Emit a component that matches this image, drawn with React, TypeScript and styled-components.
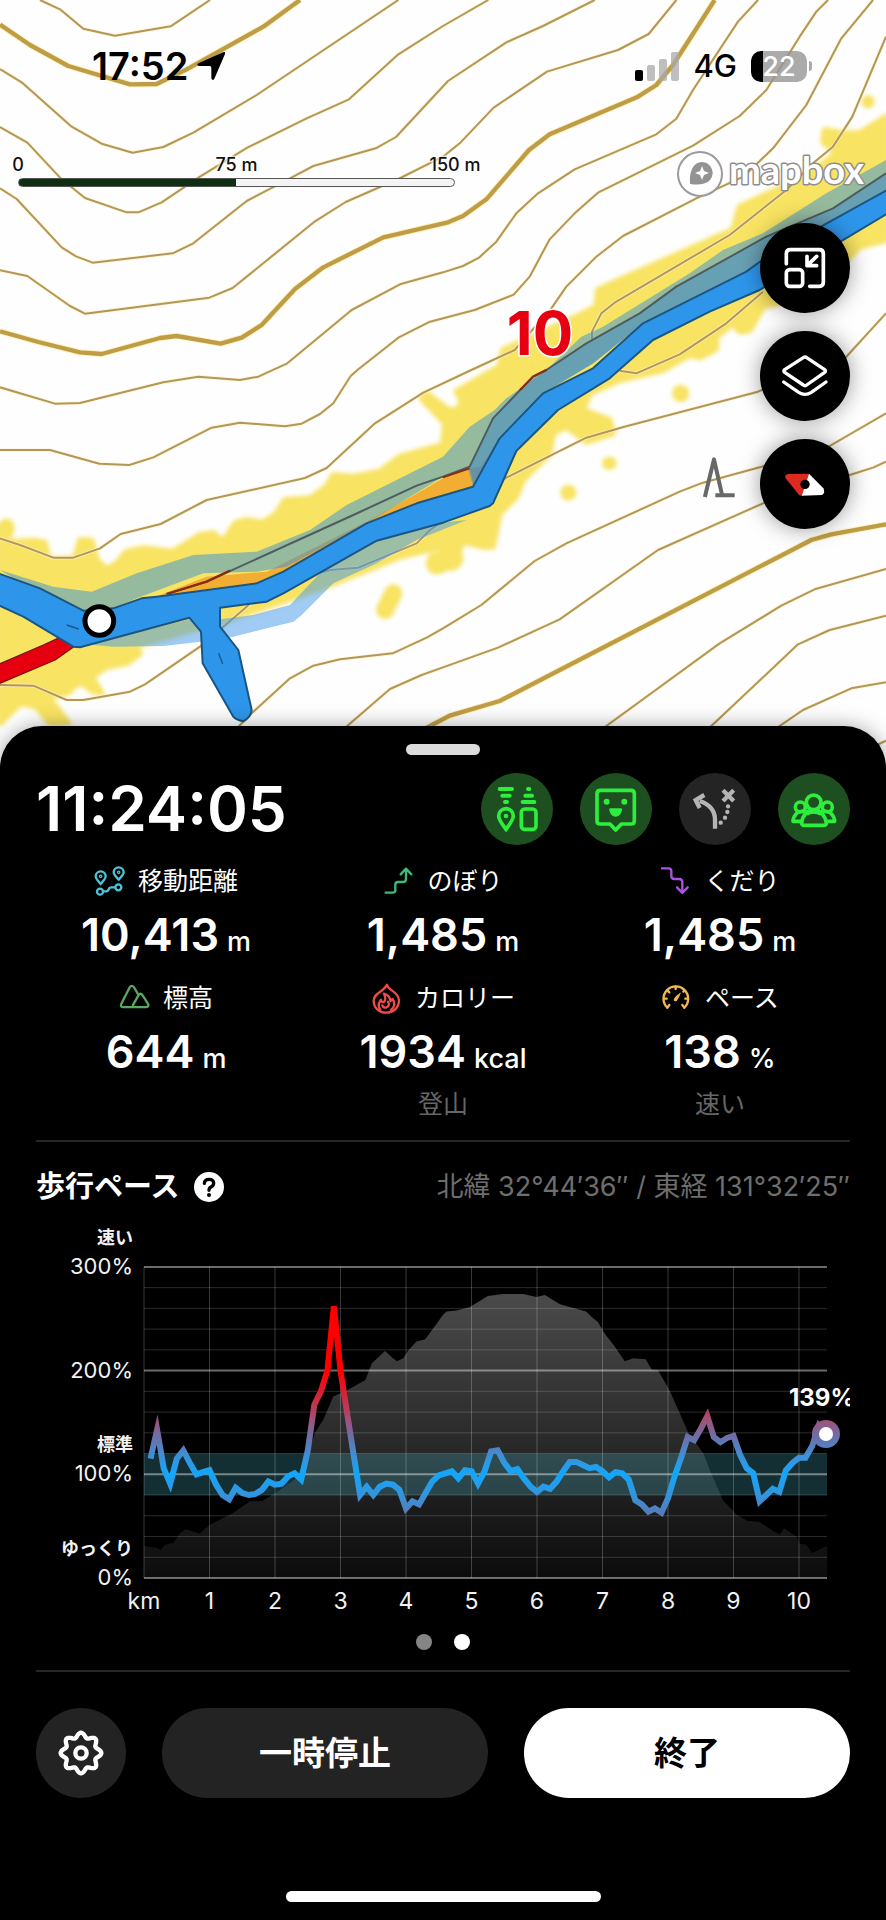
import React from "react";
import styled, { createGlobalStyle } from "styled-components";

const GlobalStyle = createGlobalStyle`
  *, *::before, *::after { box-sizing: border-box; }
  body {
    margin: 0;
    background: #000;
    font-family: Inter, "Noto Sans CJK JP", sans-serif;
    -webkit-font-smoothing: antialiased;
  }
  button { font: inherit; border: 0; padding: 0; cursor: pointer; }
`;

/* ---------- layout ---------- */

const Page = styled.main`
  min-height: 100vh;
  display: flex;
  flex-direction: column;
  background: #fff;
`;

const MapArea = styled.section`
  position: relative;
  height: 790px;
  overflow: hidden;
  background: #fefefe;
`;

const MapCanvas = styled.svg`
  position: absolute;
  inset: 0;
  width: 100%;
  height: 100%;
`;

const MapOverlay = styled.div`
  position: relative;
  display: flex;
  flex-direction: column;
`;

const StatusBar = styled.header`
  display: flex;
  align-items: center;
  justify-content: space-between;
  padding: 44px 74px 0 92px;
  height: 88px;
`;

const StatusGroup = styled.div<{ $gap: number }>`
  display: flex;
  align-items: center;
  gap: ${(p) => p.$gap}px;
`;

const Clock = styled.time`
  font-size: 38px;
  line-height: 44px;
  font-weight: 600;
  color: #000;
`;

const Network = styled.span`
  font-size: 31px;
  line-height: 44px;
  font-weight: 500;
  color: #000;
`;

const Battery = styled.div`
  display: flex;
  align-items: center;
  gap: 2px;
`;

const BatteryBody = styled.div`
  width: 56px;
  height: 31px;
  border-radius: 10px;
  background: linear-gradient(to right, #000 22%, rgba(150, 150, 150, 0.8) 22%);
  color: #fff;
  font-size: 27px;
  line-height: 31px;
  font-weight: 500;
  text-align: center;
`;

const BatteryNub = styled.div`
  width: 3px;
  height: 10px;
  border-radius: 0 3px 3px 0;
  background: #aaa;
`;

const MapInfo = styled.div`
  display: flex;
  justify-content: space-between;
  padding: 60px 18px 0;
`;

const Scale = styled.div`
  display: flex;
  flex-direction: column;
  gap: 4px;
  width: 437px;
`;

const ScaleLabels = styled.div`
  position: relative;
  height: 22px;
  font-size: 18px;
  line-height: 22px;
  font-weight: 500;
  color: #111;
`;

const ScaleLabel = styled.span<{ $at: number }>`
  position: absolute;
  left: ${(p) => p.$at}%;
  top: 6px;
  white-space: nowrap;
  transform: translateX(-50%);
  text-shadow: 0 0 3px #fff, 0 0 3px #fff, 0 0 3px #fff;
`;

const ScaleBar = styled.div`
  height: 9px;
  margin-top: 4px;
  border: 1px solid #555;
  border-radius: 5px;
  background: linear-gradient(to right, #0f2f12 50%, #f4f4f4 50%);
`;

const MapboxMark = styled.svg`
  width: 192px;
  height: 50px;
  overflow: visible;
`;

const MapButtons = styled.div`
  display: flex;
  flex-direction: column;
  align-items: flex-end;
  gap: 18px;
  padding: 25px 36px 0;
`;

const RoundButton = styled.button<{ $bg: string; $size: number; $shadow?: boolean }>`
  display: flex;
  align-items: center;
  justify-content: center;
  flex: none;
  width: ${(p) => p.$size}px;
  height: ${(p) => p.$size}px;
  border-radius: 50%;
  background: ${(p) => p.$bg};
  box-shadow: ${(p) => (p.$shadow ? "0 0 22px rgba(0, 0, 0, 0.4)" : "none")};

  svg { width: 100%; height: 100%; }
`;

const Sheet = styled.section`
  position: relative;
  flex: 1;
  display: flex;
  flex-direction: column;
  margin-top: -64px;
  padding: 18px 36px 18px;
  border-radius: 42px 42px 0 0;
  background: #000;
  color: #fff;
  box-shadow: 0 0 20px rgba(0, 0, 0, 0.35);
`;

const Grabber = styled.div`
  align-self: center;
  width: 74px;
  height: 11px;
  border-radius: 6px;
  background: #dcdcdc;
`;

const SummaryRow = styled.div`
  display: flex;
  align-items: center;
  justify-content: space-between;
  margin-top: 18px;
  height: 72px;
`;

const Elapsed = styled.h1`
  margin: 0;
  font-size: 62px;
  line-height: 72px;
  font-weight: 600;
`;

const StatusButtons = styled.div`
  display: flex;
  gap: 27px;
`;

const Metrics = styled.dl`
  display: grid;
  grid-template-columns: repeat(3, 1fr);
  column-gap: 17px;
  row-gap: 15px;
  margin: 18px 0;
`;

const Metric = styled.div`
  display: flex;
  flex-direction: column;
  align-items: center;
`;

const MetricLabel = styled.dt`
  display: flex;
  align-items: center;
  gap: 14px;
  height: 36px;
  font-size: 25px;
  line-height: 36px;
`;

const MetricIcon = styled.svg`
  width: 30px;
  height: 30px;
  overflow: visible;
`;

const MetricValue = styled.dd`
  display: flex;
  align-items: baseline;
  gap: 8px;
  height: 60px;
  margin: 6px 0 0;
  font-size: 45px;
  line-height: 60px;
  font-weight: 600;
`;

const Unit = styled.span`
  font-size: 27px;
  line-height: 36px;
  font-weight: 500;
`;

const MetricNote = styled.dd`
  margin: 4px 0 0;
  font-size: 25px;
  line-height: 36px;
  color: #666;
`;

const Divider = styled.hr`
  width: 100%;
  height: 2px;
  margin: 0;
  border: 0;
  background: #262626;
`;

const ChartHeader = styled.div`
  display: flex;
  align-items: center;
  justify-content: space-between;
  height: 44px;
  margin-top: 23px;
`;

const ChartTitle = styled.h2`
  display: flex;
  align-items: center;
  gap: 14px;
  margin: 0;
  font-size: 29px;
  line-height: 44px;
  font-weight: 700;
`;

const Coordinates = styled.p`
  margin: 0;
  font-size: 27px;
  line-height: 44px;
  color: #6e6e6e;
`;

const Chart = styled.svg`
  display: block;
  width: 100%;
  margin-top: 16px;
`;

const Pager = styled.div`
  display: flex;
  justify-content: center;
  gap: 22px;
  margin: 17px 0 20px;
`;

const Dot = styled.button<{ $active?: boolean }>`
  width: 16px;
  height: 16px;
  border-radius: 50%;
  background: ${(p) => (p.$active ? "#fff" : "#858585")};
`;

const Actions = styled.div`
  display: flex;
  gap: 36px;
  margin-top: 36px;
`;

const ActionButton = styled.button<{ $primary?: boolean }>`
  flex: 1;
  height: 90px;
  border-radius: 45px;
  background: ${(p) => (p.$primary ? "#fff" : "#232323")};
  color: ${(p) => (p.$primary ? "#000" : "#fff")};
  font-size: 33px;
  line-height: 44px;
  font-weight: 700;
`;

const HomeIndicator = styled.div`
  align-self: center;
  width: 315px;
  height: 11px;
  margin-top: auto;
  border-radius: 6px;
  background: #fff;
`;

const thinContours = [
  "120,0 180,28 250,86 345,107 512,79 630,0",
  "0,207 65,247 215,380 305,431 398,458 490,441 580,398 770,285 1195,0",
  "0,381 82,428 185,538 255,594 380,637 415,637 485,607 600,530 742,443 920,355 1047,298 1195,163 1329,78 1465,0",
  "0,565 50,597 185,742 228,769 278,788 518,760 580,730 740,603 870,535 940,498 1127,445 1188,411 1344,243 1519,127 1629,78 1784,0",
  "0,811 82,828 210,918 255,941 628,893 698,864 945,664 1037,606 1195,537 1329,470 1379,430 1481,323 1641,215 1854,150 1946,102 2029,0",
  "0,1162 165,1211 240,1209 490,1147 595,1130 720,1140 775,1130 862,1090 1055,930 1200,853 1329,817 1389,798 1437,773 1489,725 1549,640 1614,580 1724,508 1969,403 2029,356 2079,270 2214,65 2274,0",
  "0,1350 150,1350 298,1391 388,1395 460,1372 635,1283 720,1268 855,1279 905,1271 960,1242 1000,1210 1052,1128 1075,1108 1195,1013 1290,965 1424,930 1541,884 1589,830 1649,718 1724,640 1794,578 2079,437 2219,348 2299,270 2399,110 2449,35 2484,0",
  "0,1615 60,1635 160,1673 220,1673 300,1645 362,1602 482,1572 620,1500 915,1434 980,1404 1125,1270 1270,1178 1414,1110 1544,1050 1654,925 1699,860 1789,770 1869,708 2089,595 2230,530 2319,445 2419,315 2524,115 2619,0",
  "1776,1020 1776,995 1804,940 1844,908 2189,705 2359,570 2439,490 2499,440 2557,350 2658,110",
  "1859,1112 1909,1120 2039,1063 2179,970 2289,875",
  "2658,940 2530,1080 2400,1120 2274,1175 1873,1280 1759,1313 1519,1433 1290,1590 1250,1630 1075,1703 990,1710 800,1760 740,1820 670,1880 600,1940 435,2053 390,2075 250,2100 200,2100 100,2057 0,2055",
  "2658,1240 2489,1338 2279,1402 2109,1448 2039,1475 1699,1630 1604,1683 1444,1815 1329,1885 1280,1913 1178,1960 1020,1978 940,1997 870,2035 755,2140 705,2190",
  "2658,1385 2619,1403 2549,1425 2289,1510 1974,1650 1679,1858 1494,1943 1329,2002 1265,2025 1170,2067 1045,2175 1000,2215",
  "2658,1707 2444,1768 2344,1817 2159,1930 1819,2178 1770,2215",
  "2658,1847 2489,1890 2394,1933 2134,2178 2090,2220",
  "2658,2047 2554,2065 2409,2130 2339,2178 2280,2220",
  "2600,2250 2658,2222",
];

const thickContours = [
  "0,74 90,135 205,198 390,253 470,252 560,208 790,80 900,0",
  "0,994 115,1026 240,1057 305,1062 480,1014 530,1008 662,1031 725,1013 785,975 885,867 970,802 1150,712 1344,667 1389,648 1459,598 1587,450 1649,403 1914,290 1969,255 2019,195 2144,0",
  "2658,1573 2494,1603 2434,1620 2279,1700 1499,2103 1349,2147 1220,2215",
];

const heatArea =
  "0,1575 30,1625 100,1622 135,1628 145,1680 225,1675 240,1620 275,1622 290,1680 320,1708 350,1690 380,1655 430,1645 520,1655 600,1605 640,1600 670,1625 705,1570 740,1560 790,1568 830,1540 855,1500 930,1495 980,1460 1000,1425 1060,1430 1140,1415 1200,1370 1329,1335 1335,1270 1265,1195 1280,1180 1345,1230 1375,1230 1385,1200 1369,1175 1499,1100 1509,1050 1599,1010 1719,955 1789,920 1794,870 1859,840 2199,690 2219,620 2349,560 2429,520 2509,460 2469,425 2475,390 2519,398 2579,400 2658,350 2658,720 2579,740 2520,800 2370,900 2289,920 2250,990 2220,995 2199,970 2149,1010 2149,1045 2100,1072 2069,1065 1989,1110 1859,1140 1769,1180 1749,1230 1829,1260 1839,1300 1759,1325 1699,1280 1659,1300 1649,1360 1569,1440 1549,1490 1499,1540 1479,1640 1449,1640 1389,1625 1369,1670 1329,1710 1329,1640 1200,1670 1000,1750 860,1800 680,1860 400,1940 420,1960 380,1990 320,2000 275,2030 305,2080 280,2075 240,2045 200,2080 145,2090 205,2170 150,2170 110,2120 60,2110 0,2170";

const upperBand =
  "2658,480 2479,580 2289,700 2169,750 2069,820 1809,980 1744,1010 1639,1110 1519,1195 1484,1230 1409,1280 1329,1370 1040,1515 930,1590 770,1655 580,1665 410,1720 275,1775 160,1760 0,1710 240,1860 340,1825 410,1795 610,1720 770,1715 860,1700 1100,1570 1329,1430 1404,1407 1420,1460 1500,1315 1630,1180 1780,1090 1930,970 2240,815 2658,570";
const trackBand =
  "2658,520 2499,625 2299,710 2029,860 1919,940 1759,1030 1639,1110 1599,1130 1479,1255 1409,1400 1420,1450 1500,1315 1630,1180 1780,1090 1930,970 2240,815 2658,570";
const track =
  "2658,520 2499,625 2299,710 2029,860 1919,940 1759,1030 1639,1110 1599,1130 1479,1255 1409,1400 1329,1430 1250,1457 1060,1545 620,1745 500,1782";
const lowerBand =
  "0,1815 70,1850 220,1930 340,1940 490,1938 600,1925 700,1910 880,1865 905,1845 1000,1750 1130,1690 1250,1620 1400,1560 1329,1568 1130,1622 960,1720 870,1815 760,1845 662,1858 600,1850 240,1940 70,1850 0,1800";
const river =
  "-20,1715 120,1765 250,1832 340,1825 425,1795 470,1790 770,1750 850,1715 1100,1570 1250,1510 1419,1460 1499,1315 1629,1180 1779,1105 1929,970 2239,815 2300,770 2680,560 2680,630 2279,870 2129,935 1959,1020 1829,1135 1674,1230 1549,1353 1479,1510 1469,1518 1329,1568 1130,1622 850,1780 800,1805 660,1823 660,1880 715,1950 755,2130 Q754,2150 730,2164 Q708,2160 700,2150 L608,1990 603,1895 568,1853 240,1942 220,1940 70,1850 -20,1808";

const heatSpots: [number, number, number, number][] = [
  [2604, 305, 20, 20], [2042, 1180, 26, 26], [1828, 1390, 22, 20], [1705, 1478, 24, 24],
  [1310, 1690, 32, 34], [1350, 1675, 40, 38], [20, 1585, 24, 30], [2238, 970, 24, 30],
  [2110, 1035, 44, 36],
];

function TerrainMap() {
  return (
    <MapCanvas viewBox="0 0 886 790" preserveAspectRatio="xMidYMin slice" role="img" aria-label="地形図">
      <defs>
        <filter id="soft" x="-5%" y="-5%" width="110%" height="110%">
          <feGaussianBlur stdDeviation="7" />
        </filter>
      </defs>
      <g transform="scale(0.333333)" strokeLinejoin="round">
        <g filter="url(#soft)" fill="#f8e362">
          <polygon points={heatArea} stroke="#f8e362" strokeWidth="18" />
          {heatSpots.map(([x, y, rx, ry]) => (
            <ellipse key={x} cx={x} cy={y} rx={rx} ry={ry} />
          ))}
          <path d="M1180,1780L1155,1830" stroke="#f8e362" strokeWidth="54" strokeLinecap="round" />
        </g>
        <g fill="none" stroke="#fff3c4" strokeWidth="11" strokeOpacity="0.7">
          {thinContours.map((p) => <polyline key={p} points={p} />)}
        </g>
        <g fill="none" stroke="#b3965a" strokeWidth="6">
          {thinContours.map((p) => <polyline key={p} points={p} />)}
        </g>
        <g fill="none" stroke="#fff3c4" strokeWidth="19">
          {thickContours.map((p) => <polyline key={p} points={p} />)}
        </g>
        <g fill="none" stroke="#bf9d47" strokeWidth="13">
          {thickContours.map((p) => <polyline key={p} points={p} />)}
        </g>
        <polygon
          points="480,1785 620,1730 800,1715 900,1665 1110,1560 1260,1475 1329,1435 1404,1407 1440,1400 1500,1320 1470,1360 1420,1460 1329,1490 1100,1575 800,1760"
          fill="#f2ae33"
        />
        <polygon points={upperBand} fill="#2c8fe0" fillOpacity="0.48" />
        <polygon points={trackBand} fill="#3a86c8" fillOpacity="0.5" />
        <polygon points={lowerBand} fill="#3f97ea" fillOpacity="0.5" />
        <polyline points={track} fill="none" stroke="#4d5c60" strokeWidth="6" />
        <polyline points="1639,1110 1599,1130 1560,1170" fill="none" stroke="#8a2b12" strokeWidth="6" />
        <polyline points="1409,1405 1329,1432" fill="none" stroke="#8a2b12" strokeWidth="6" />
        <polyline points="690,1712 620,1745 500,1782" fill="none" stroke="#8a2b12" strokeWidth="7" />
        <polygon points="-20,2000 130,1935 180,1912 225,1938 165,1980 -20,2058" fill="#e6000f" stroke="#7a1313" strokeWidth="4" />
        <path d={`M${river}Z`} fill="#2e96ea" stroke="#1a5683" strokeWidth="6" />
        <path d="M200,1875l36,12M656,1960l12,32" stroke="#1a5683" strokeWidth="4" />
        <circle cx="298" cy="1863" r="43" fill="#fff" stroke="#000" strokeWidth="15" />
        <path d="M2116,1485L2142,1378L2166,1484M2152,1486H2198" fill="none" stroke="#686868" strokeWidth="12" strokeLinecap="square" />
      </g>
      <text x="540" y="355" textAnchor="middle" fontFamily="Inter, sans-serif" fontSize="60" fontWeight="700" fill="#e60012" stroke="#fff" strokeWidth="3" paintOrder="stroke">10</text>
    </MapCanvas>
  );
}

/* ---------- icons ---------- */

const LocationArrow = () => (
  <svg width="30" height="30" viewBox="0 0 90 90" aria-hidden="true">
    <path d="M81 4Q89 0 87 9L55 83Q50 91 46 82V50Q46 45 41 45H9Q0 43 7 37Z" />
  </svg>
);

const Signal = () => (
  <svg width="44" height="29" viewBox="0 0 44 29" aria-label="電波">
    <rect x="0" y="18" width="8" height="11" rx="2" />
    <g fill="#a9a9a9" fillOpacity=".75">
      <rect x="12" y="13" width="8" height="16" rx="2" />
      <rect x="24" y="7" width="8" height="22" rx="2" />
      <rect x="36" y="0" width="8" height="29" rx="2" />
    </g>
  </svg>
);

const MapboxLogo = () => (
  <MapboxMark viewBox="0 0 192 50" role="img" aria-label="mapbox">
    <circle cx="24" cy="26" r="22" fill="#fff" fillOpacity=".85" stroke="#9a9a9a" strokeWidth="2" />
    <path d="M14 36C13 24 17 14 26 14A11 11 0 0 1 34 32C29 37 21 37 14 36Z" fill="#939393" />
    <path d="M26 18L28 23L33 25L28 27L26 32L24 27L19 25L24 23Z" fill="#fff" />
    <text x="53" y="36" fontFamily="Lato, sans-serif" fontSize="38" fontWeight="700" fill="#fff" stroke="#8d8d8d" strokeWidth="3" strokeLinejoin="round" paintOrder="stroke">mapbox</text>
  </MapboxMark>
);

const CollapseIcon = () => (
  <svg viewBox="60 40 270 270" fill="none" stroke="#fff" strokeWidth="11" strokeLinecap="round" strokeLinejoin="round">
    <path d="M139 162V132Q139 120 151 120H238Q250 120 250 132V218Q250 230 238 230H209" />
    <rect x="139" y="180" width="49" height="50" rx="10" />
    <path d="M230 140L202 167M201 140V168H230" />
  </svg>
);

const LayersIcon = () => (
  <svg viewBox="60 364 270 270" fill="none" stroke="#fff" strokeWidth="10" strokeLinecap="round" strokeLinejoin="round">
    <path d="M190 444Q195 440 200 444L254 480Q259 484 254 488L200 526Q195 530 190 526L134 488Q129 484 134 480Z" />
    <path d="M131 517L176 548Q195 560 214 548L258 517" />
  </svg>
);

const CompassIcon = () => (
  <svg viewBox="60 688 270 270">
    <path d="M207 792L185 858L178 857L138 807Q130 796 144 793Z" fill="#dc2a20" />
    <path d="M207 792L250 836Q257 850 246 856L185 858Z" fill="#fff" />
    <circle cx="195" cy="824" r="14" />
  </svg>
);

const GREEN = "#2dee3c";

const DeviceShareIcon = () => (
  <svg viewBox="0 0 216 216" fill="none" stroke={GREEN} strokeWidth="11" strokeLinecap="round">
    <path d="M56 48H93M64 68H86M72 87H78M141 48H145M133 68H153M125 87H160" strokeWidth="12" />
    <path d="M75 169Q53 140 53 129A22 22 0 0 1 97 129Q97 140 75 169Z" />
    <circle cx="75" cy="129" r="7" fill={GREEN} stroke="none" />
    <rect x="121" y="108" width="44" height="61" rx="10" />
  </svg>
);

const ChatFaceIcon = () => (
  <svg viewBox="0 0 216 216" fill="none" stroke={GREEN} strokeWidth="11" strokeLinejoin="round">
    <path d="M61 52H153Q163 52 163 62V143Q163 153 153 153H124L107 171L90 153H61Q51 153 51 143V62Q51 52 61 52Z" />
    <g fill={GREEN} stroke="none">
      <circle cx="80" cy="86" r="9" />
      <circle cx="133" cy="86" r="9" />
      <path d="M91 106H123Q128 106 126 112Q122 131 107 131Q92 131 88 112Q86 106 91 106Z" />
    </g>
  </svg>
);

const OffRouteIcon = () => (
  <svg viewBox="0 0 216 216" fill="none" stroke="#b4b4b4" strokeWidth="13">
    <path d="M108 167V140Q108 100 62 84" />
    <path d="M76 66L50 81L62 105" strokeLinejoin="miter" />
    <path d="M132 52L164 84M164 52L132 84" />
    <path d="M147 100h.1M145 117h.1M138 134h.1M125 149h.1" strokeLinecap="round" />
  </svg>
);

const GroupIcon = () => (
  <svg viewBox="0 0 216 216" fill="none" stroke={GREEN} strokeWidth="11" strokeLinejoin="round">
    <circle cx="67" cy="102" r="15" />
    <circle cx="148" cy="102" r="15" />
    <path d="M85 119Q71 110 57 120Q45 132 45 145H70M130 119Q144 110 158 120Q170 132 170 145H146" />
    <circle cx="107" cy="88" r="22" fill="#1d4f21" />
    <path d="M84 120Q107 102 131 120Q143 134 145 150Q145 157 137 157H79Q71 157 71 150Q72 134 84 120Z" fill="#1d4f21" />
    <path d="M84 121Q107 107 131 121" strokeWidth="16" />
  </svg>
);

const DistanceIcon = () => (
  <MetricIcon viewBox="0 0 90 90" fill="none" stroke="#4fc3d3" strokeWidth="7">
    <path d="M20 54Q5 38 5 31A15 15 0 0 1 35 31Q35 38 20 54ZM74 41Q59 26 59 19A15 15 0 0 1 89 19Q89 26 74 41Z" />
    <circle cx="20" cy="31" r="2" />
    <circle cx="74" cy="19" r="2" />
    <circle cx="18" cy="77" r="9" />
    <circle cx="73" cy="64" r="9" />
    <path d="M27 76H35Q42 76 44 70Q46 64 52 64H64" />
  </MetricIcon>
);

const AscentIcon = () => (
  <MetricIcon viewBox="0 0 90 90" fill="none" stroke="#3fb878" strokeWidth="7" strokeLinecap="round" strokeLinejoin="round">
    <path d="M8 80H29Q37 80 37 72V56Q37 48 45 48H59Q69 48 69 38V10M53 25L69 8L85 25" />
  </MetricIcon>
);

const DescentIcon = () => (
  <MetricIcon viewBox="0 0 90 90" fill="none" stroke="#ad52e2" strokeWidth="7" strokeLinecap="round" strokeLinejoin="round">
    <path d="M6 7H26Q34 7 34 15V30Q34 39 43 39H57Q67 39 67 49V78M51 64L67 81L83 64" />
  </MetricIcon>
);

const MountainIcon = () => (
  <MetricIcon viewBox="0 0 92 90" fill="none" stroke="#58a860" strokeWidth="7" strokeLinecap="round" strokeLinejoin="round">
    <path d="M12 73Q3 72 7 63L33 12Q39 3 46 12L57 31M12 73H83Q93 72 89 63L72 36Q66 28 60 36L43 66Q41 73 48 73" />
  </MetricIcon>
);

const FlameIcon = () => (
  <MetricIcon viewBox="0 0 90 90" fill="none" stroke="#ee4a48" strokeWidth="7" strokeLinecap="round" strokeLinejoin="round">
    <path d="M48 5C49 22 82 24 84 52C84 76 66 89 45 89C24 89 8 74 8 53C8 30 36 28 48 5Z" />
    <path d="M28 80C18 66 24 57 30 50C32 62 40 58 42 52C45 44 41 38 39 32C54 37 58 45 58 54L65 48C74 62 68 74 60 81" />
    <path d="M34 67C36 74 44 76 50 71C55 67 54 60 51 56" />
  </MetricIcon>
);

const GaugeIcon = () => (
  <MetricIcon viewBox="0 0 90 90" fill="none" stroke="#f3b850" strokeWidth="7" strokeLinecap="round">
    <path d="M19 74A37 37 0 1 1 70 74" />
    <path d="M19 74L25 66M70 74L64 66M9 47H17M80 47H73M19 22L25 28M44 11V18M67 26L70 22" />
    <path d="M38 50Q42 40 60 28Q54 46 47 54Q39 57 38 50Z" fill="#f3b850" stroke="none" />
  </MetricIcon>
);

const HelpIcon = () => (
  <svg width="30" height="30" viewBox="0 0 90 90" aria-hidden="true">
    <circle cx="45" cy="45" r="45" fill="#fff" />
    <path d="M31 34Q32 22 45 22Q59 22 59 34Q59 41 51 45Q45 48 45 55" fill="none" stroke="#000" strokeWidth="10" strokeLinecap="round" />
    <circle cx="45" cy="69" r="6" />
  </svg>
);

const gearOutline = Array.from({ length: 144 }, (_, i) => {
  const a = (i / 144) * Math.PI * 2;
  const r = 54 + 7 * Math.cos(a * 8);
  return `${(135 + r * Math.sin(a)).toFixed(1)},${(135 - r * Math.cos(a)).toFixed(1)}`;
}).join(" ");

const GearIcon = () => (
  <svg viewBox="0 0 270 270" fill="none" stroke="#fff" strokeWidth="13" strokeLinejoin="round">
    <polygon points={gearOutline} />
    <circle cx="135" cy="135" r="17" />
  </svg>
);

/* ---------- chart ---------- */

// Walking pace in percent, one sample every 0.1 km, starting at 0.1 km.
const pace = [
  115, 143, 106, 91, 115, 123, 111, 100, 102, 104, 90, 80, 76, 87, 82, 80, 81, 85, 93, 90, 91, 98, 101, 95, 123,
  167, 180, 200, 262, 200, 159, 119, 80, 88, 80, 88, 91, 90, 85, 67, 74, 71, 82, 93, 99, 101, 103, 96, 104, 103,
  91, 103, 122, 123, 111, 103, 105, 96, 88, 83, 88, 86, 93, 103, 112, 112, 109, 106, 107, 103, 97, 102, 101, 95,
  75, 71, 64, 67, 63, 77, 98, 116, 136, 133, 144, 156, 136, 131, 135, 137, 119, 106, 101, 74, 80, 86, 83, 104,
  111, 116, 116, 127, 147, 139,
];

// Elevation profile: distance (km) and height on the pace scale.
const elevation: [number, number][] = [
  [0, 31], [0.2, 29], [0.25, 27], [0.32, 32], [0.45, 34], [0.55, 43], [0.63, 47], [0.85, 43], [1, 51], [1.34, 62],
  [1.62, 74], [1.8, 74], [2.03, 83], [2.3, 95], [2.45, 112], [2.61, 140], [2.74, 153], [2.89, 175], [3.1, 181],
  [3.38, 191], [3.48, 207], [3.68, 219], [3.78, 213], [3.86, 209], [3.96, 212], [4.04, 220], [4.16, 228],
  [4.29, 230], [4.42, 241], [4.57, 254], [4.62, 257], [4.77, 258], [4.97, 261], [5.25, 272], [5.48, 274],
  [5.79, 274], [5.99, 271], [6.12, 273], [6.35, 264], [6.75, 257], [6.83, 252], [6.93, 247], [7.03, 236],
  [7.19, 223], [7.34, 209], [7.47, 212], [7.66, 211], [7.75, 201], [7.85, 200], [8.03, 180], [8.31, 140],
  [8.54, 120], [8.64, 104], [8.84, 75], [9.05, 61], [9.22, 55], [9.4, 54], [9.61, 45], [9.71, 42], [9.77, 48],
  [9.96, 40], [10.01, 33], [10.11, 32], [10.2, 24], [10.43, 31],
];

const xAt = (km: number) => 108 + km * 65.5;
const yAt = (pct: number) => 353 - pct * 1.037;
const PLOT_END = 791;

const paceLine = pace
  .map((p, i) => `${(i === pace.length - 1 ? 790 : xAt((i + 1) / 10)).toFixed(1)},${yAt(p).toFixed(1)}`)
  .join(" ");
const elevationArea =
  `108,353 ` + elevation.map(([k, p]) => `${xAt(k).toFixed(1)},${yAt(p).toFixed(1)}`).join(" ") + ` ${PLOT_END},353`;

const captions: [string, number][] = [["速い", 300], ["標準", 100], ["ゆっくり", 0]];

function PaceChart() {
  return (
    <Chart viewBox="0 0 814 392" role="img" aria-label="歩行ペースのグラフ">
      <defs>
        <linearGradient id="pace" gradientUnits="userSpaceOnUse" x1="0" y1={yAt(200)} x2="0" y2={yAt(60)}>
          <stop offset="0" stopColor="#ff0000" />
          <stop offset="0.12" stopColor="#e01828" />
          <stop offset="0.32" stopColor="#a84c70" />
          <stop offset="0.46" stopColor="#6b70aa" />
          <stop offset="0.6" stopColor="#3a92da" />
          <stop offset="0.71" stopColor="#12a6fa" />
          <stop offset="0.85" stopColor="#3395dd" />
          <stop offset="1" stopColor="#5a78b4" />
        </linearGradient>
        <linearGradient id="elev" x1="0" y1="0" x2="0" y2="1">
          <stop offset="0" stopColor="#4a4a4a" />
          <stop offset="1" stopColor="#0c0c0c" />
        </linearGradient>
      </defs>
      <polygon points={elevationArea} fill="url(#elev)" />
      <rect x="108" y={yAt(120)} width={PLOT_END - 108} height={yAt(80) - yAt(120)} fill="#4fb4c8" fillOpacity="0.26" />
      <g stroke="#fff">
        {Array.from({ length: 16 }, (_, i) => i * 20).map((p) => (
          <line key={p} x1="108" x2={PLOT_END} y1={yAt(p)} y2={yAt(p)} strokeWidth={p % 100 ? 1 : 2} strokeOpacity={p % 100 ? 0.17 : 0.42} />
        ))}
        {Array.from({ length: 11 }, (_, k) => (
          <line key={k} x1={xAt(k)} x2={xAt(k)} y1={yAt(300)} y2={yAt(0)} strokeWidth="1" strokeOpacity="0.22" />
        ))}
      </g>
      <polyline points={paceLine} fill="none" stroke="url(#pace)" strokeWidth="6" strokeMiterlimit="6" />
      <circle cx="790" cy="209" r="14" fill="url(#pace)" />
      <circle cx="790" cy="209" r="7" fill="#fff" />
      <text x="753" y="181" fill="#fff" fontSize="24" fontWeight="700">139%</text>
      <g fill="#f2f2f2" textAnchor="end" fontSize="18" fontWeight="700">
        {captions.map(([label, p]) => <text key={p} x="97" y={yAt(p) - 23}>{label}</text>)}
      </g>
      <g fill="#f2f2f2" textAnchor="end" fontSize="22">
        {[300, 200, 100, 0].map((p) => <text key={p} x="97" y={yAt(p) + 7}>{p}%</text>)}
      </g>
      <g fill="#f2f2f2" textAnchor="middle" fontSize="23">
        <text x="108" y="384">km</text>
        {Array.from({ length: 10 }, (_, i) => <text key={i} x={xAt(i + 1)} y="384">{i + 1}</text>)}
      </g>
    </Chart>
  );
}

/* ---------- screen ---------- */

const metrics = [
  { icon: <DistanceIcon />, label: "移動距離", value: "10,413", unit: "m" },
  { icon: <AscentIcon />, label: "のぼり", value: "1,485", unit: "m" },
  { icon: <DescentIcon />, label: "くだり", value: "1,485", unit: "m" },
  { icon: <MountainIcon />, label: "標高", value: "644", unit: "m" },
  { icon: <FlameIcon />, label: "カロリー", value: "1934", unit: "kcal", note: "登山" },
  { icon: <GaugeIcon />, label: "ペース", value: "138", unit: "%", note: "速い" },
];

export default function App() {
  return (
    <Page>
      <GlobalStyle />
      <MapArea>
        <TerrainMap />
        <MapOverlay>
          <StatusBar>
            <StatusGroup $gap={8}>
              <Clock>17:52</Clock>
              <LocationArrow />
            </StatusGroup>
            <StatusGroup $gap={14}>
              <Signal />
              <Network>4G</Network>
              <Battery>
                <BatteryBody>22</BatteryBody>
                <BatteryNub />
              </Battery>
            </StatusGroup>
          </StatusBar>
          <MapInfo>
            <Scale>
              <ScaleLabels>
                <ScaleLabel $at={0}>0</ScaleLabel>
                <ScaleLabel $at={50}>75 m</ScaleLabel>
                <ScaleLabel $at={100}>150 m</ScaleLabel>
              </ScaleLabels>
              <ScaleBar />
            </Scale>
            <MapboxLogo />
          </MapInfo>
          <MapButtons>
            <RoundButton $bg="#000" $size={90} $shadow aria-label="地図を縮小"><CollapseIcon /></RoundButton>
            <RoundButton $bg="#000" $size={90} $shadow aria-label="レイヤー"><LayersIcon /></RoundButton>
            <RoundButton $bg="#000" $size={90} $shadow aria-label="コンパス"><CompassIcon /></RoundButton>
          </MapButtons>
        </MapOverlay>
      </MapArea>

      <Sheet>
        <Grabber />
        <SummaryRow>
          <Elapsed>11:24:05</Elapsed>
          <StatusButtons>
            <RoundButton $bg="#1d4f21" $size={72} aria-label="位置情報の共有"><DeviceShareIcon /></RoundButton>
            <RoundButton $bg="#1d4f21" $size={72} aria-label="フィールドメモ"><ChatFaceIcon /></RoundButton>
            <RoundButton $bg="#242424" $size={72} aria-label="ルート外れ警告"><OffRouteIcon /></RoundButton>
            <RoundButton $bg="#1d4f21" $size={72} aria-label="みまもり"><GroupIcon /></RoundButton>
          </StatusButtons>
        </SummaryRow>

        <Metrics>
          {metrics.map((m) => (
            <Metric key={m.label}>
              <MetricLabel>{m.icon}{m.label}</MetricLabel>
              <MetricValue>{m.value}<Unit>{m.unit}</Unit></MetricValue>
              {m.note && <MetricNote>{m.note}</MetricNote>}
            </Metric>
          ))}
        </Metrics>

        <Divider />

        <ChartHeader>
          <ChartTitle>歩行ペース <HelpIcon /></ChartTitle>
          <Coordinates>北緯 32°44′36″ / 東経 131°32′25″</Coordinates>
        </ChartHeader>
        <PaceChart />
        <Pager>
          <Dot aria-label="1ページ目" />
          <Dot $active aria-label="2ページ目" />
        </Pager>
        <Divider />
        <Actions>
          <RoundButton $bg="#232323" $size={90} aria-label="設定"><GearIcon /></RoundButton>
          <ActionButton>一時停止</ActionButton>
          <ActionButton $primary>終了</ActionButton>
        </Actions>
        <HomeIndicator />
      </Sheet>
    </Page>
  );
}
